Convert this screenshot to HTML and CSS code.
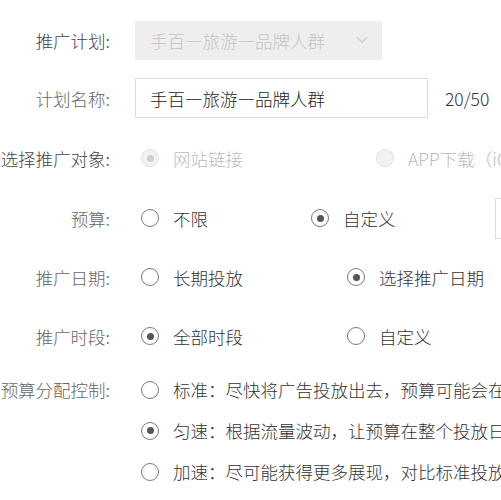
FILE: index.html
```html
<!DOCTYPE html>
<html lang="zh-CN">
<head>
<meta charset="utf-8">
<link rel="stylesheet" href="styles.css">
</head>
<body>
<div class="form">
  <div class="row r1">
    <div class="label dark">推广计划:</div>
    <div class="select">
      <span class="select-text">手百—旅游—品牌人群</span>
      <svg class="chev" width="12" height="8" viewBox="0 0 12 8"><path d="M1 1.5 L6 6 L11 1.5" fill="none" stroke="#cfcfcf" stroke-width="1.4"/></svg>
    </div>
  </div>
  <div class="row r2">
    <div class="label">计划名称:</div>
    <div class="input">手百—旅游—品牌人群</div>
    <div class="count">20/50</div>
  </div>
  <div class="row r3">
    <div class="label dark">选择推广对象:</div>
    <div class="options">
      <div class="opt w235 disabled"><span class="radio checked"></span><span>网站链接</span></div>
      <div class="opt disabled"><span class="radio"></span><span>APP下载（iOS）</span></div>
    </div>
  </div>
  <div class="row r4">
    <div class="label">预算:</div>
    <div class="options">
      <div class="opt w170"><span class="radio"></span><span>不限</span></div>
      <div class="opt w184"><span class="radio checked"></span><span>自定义</span></div>
      <div class="budget-box"></div>
    </div>
  </div>
  <div class="row r5">
    <div class="label">推广日期:</div>
    <div class="options">
      <div class="opt w206"><span class="radio"></span><span>长期投放</span></div>
      <div class="opt"><span class="radio checked"></span><span>选择推广日期</span></div>
    </div>
  </div>
  <div class="row r6">
    <div class="label">推广时段:</div>
    <div class="options">
      <div class="opt w206"><span class="radio checked"></span><span>全部时段</span></div>
      <div class="opt"><span class="radio"></span><span>自定义</span></div>
    </div>
  </div>
  <div class="row r7">
    <div class="label">预算分配控制:</div>
    <div class="stack">
      <div class="opt line"><span class="radio"></span><span>标准：尽快将广告投放出去，预算可能会在短时间内消耗完毕</span></div>
      <div class="opt line"><span class="radio checked"></span><span>匀速：根据流量波动，让预算在整个投放日内平稳消耗</span></div>
      <div class="opt line"><span class="radio"></span><span>加速：尽可能获得更多展现，对比标准投放消耗更快</span></div>
    </div>
  </div>
</div>
</body>
</html>
```

FILE: styles.css
```css
html, body {
  margin: 0;
  padding: 0;
  background: #ffffff;
  width: 501px;
  height: 500px;
  overflow: hidden;
}
body {
  font-family: "Noto Sans CJK SC", "Noto Sans", sans-serif;
  font-size: 17.5px;
  font-weight: 300;
  color: #333;
}
.form {
  padding-top: 20px;
  display: flex;
  flex-direction: column;
}
.row {
  display: flex;
  align-items: center;
  height: 40px;
  white-space: nowrap;
}
.r2 { margin-top: 18px; }
.r3 { margin-top: 20px; }
.r4 { margin-top: 20px; }
.r5 { margin-top: 19px; }
.r6 { margin-top: 19px; }
.r7 { margin-top: 13px; height: auto; align-items: flex-start; }
.label {
  width: 110px;
  flex: 0 0 110px;
  display: flex;
  justify-content: flex-end;
  color: #666;
  height: 40px;
  align-items: center;
}
.label.dark { color: #444; }
.select {
  margin-left: 25px;
  width: 247px;
  height: 39px;
  background: #eeeeee;
  display: flex;
  align-items: center;
  justify-content: space-between;
  padding: 0 10px 0 15px;
  box-sizing: border-box;
}
.select-text { color: #c4c4c4; }
.chev { margin-right: 4px; }
.input {
  margin-left: 25px;
  width: 293px;
  height: 40px;
  border: 1px solid #dcdcdc;
  box-sizing: border-box;
  padding-left: 14px;
  display: flex;
  align-items: center;
  color: #222;
}
.count {
  margin-left: 17px;
  color: #333;
}
.options {
  margin-left: 31px;
  display: flex;
  align-items: center;
}
.opt {
  display: flex;
  align-items: center;
  gap: 14px;
  flex: 0 0 auto;
}
.w235 { width: 235px; }
.w170 { width: 170px; }
.w184 { width: 184px; }
.w206 { width: 206px; }
.radio {
  width: 18px;
  height: 18px;
  box-sizing: border-box;
  border: 1.5px solid #7a7a7a;
  border-radius: 50%;
  display: flex;
  align-items: center;
  justify-content: center;
  flex: 0 0 18px;
  background: #fff;
}
.radio.checked::after {
  content: "";
  width: 7px;
  height: 7px;
  border-radius: 50%;
  background: #555;
}
.disabled { color: #bbbbbb; }
.disabled .radio {
  border-color: #e2e2e2;
  background: #f2f2f2;
}
.disabled .radio.checked::after { background: #d0d0d0; }
.budget-box {
  width: 40px;
  height: 41px;
  border: 1px solid #dcdcdc;
  box-sizing: border-box;
  flex: 0 0 40px;
}
.stack {
  margin-left: 31px;
  display: flex;
  flex-direction: column;
}
.line {
  height: 41px;
}
```
